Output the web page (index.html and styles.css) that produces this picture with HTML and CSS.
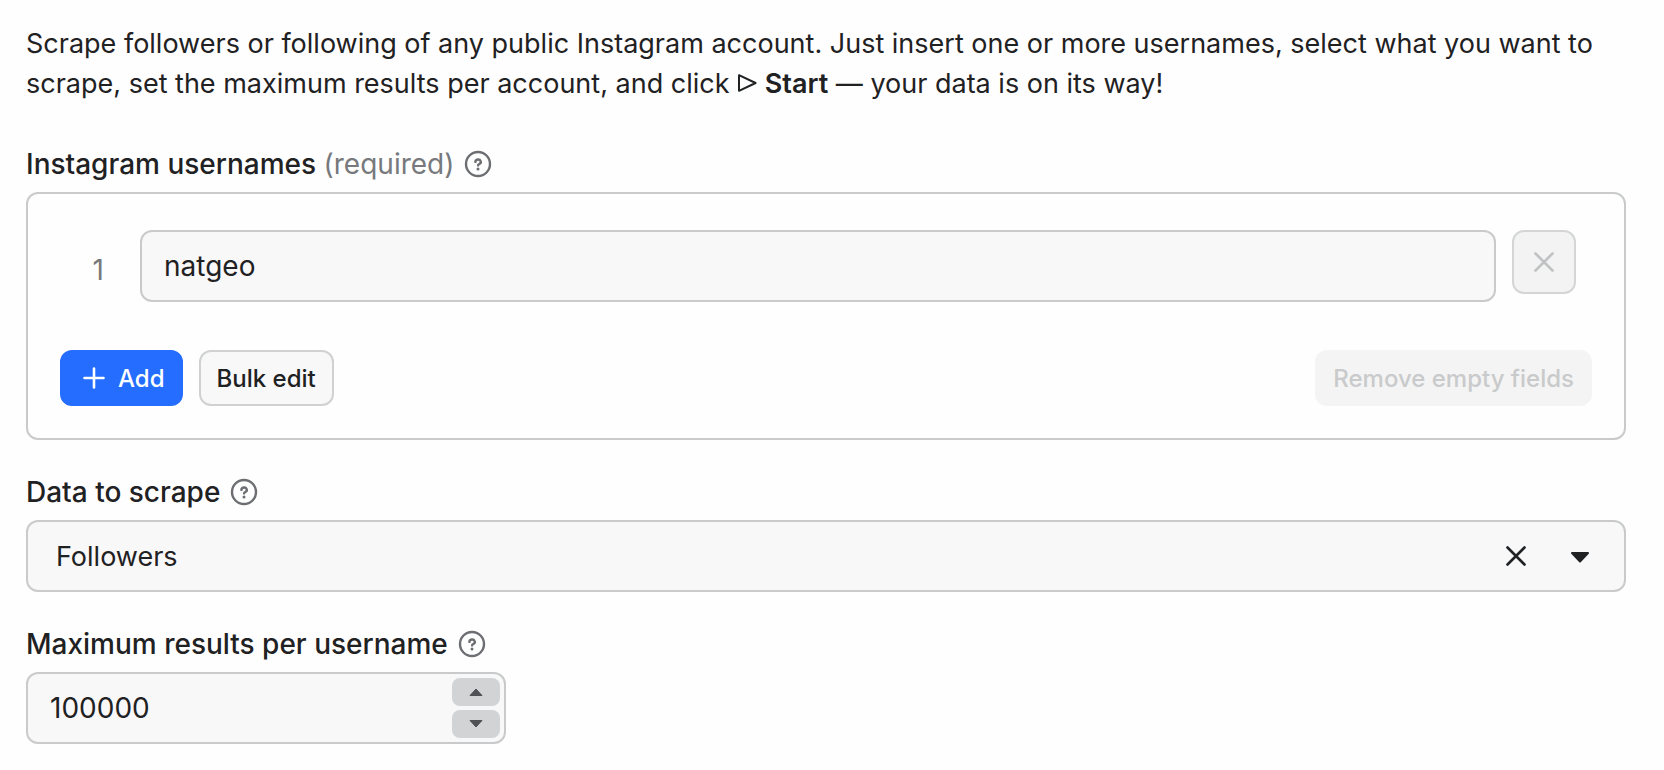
FILE: index.html
```html
<!DOCTYPE html>
<html lang="en">
<head>
  <meta charset="UTF-8">
  <meta name="viewport" content="width=device-width, initial-scale=1">
  <title>Instagram followers scraper</title>
  <link rel="stylesheet" href="styles.css">
</head>
<body>

  <form class="input-form">
    <p class="intro">
      Scrape followers or following of any public Instagram account. Just insert one or more usernames, select what you want to scrape, set the maximum results per account, and click
      <svg class="play" viewBox="0 0 20 20" aria-hidden="true"><path d="M2 2.2v15.6L18.6 10z"/></svg>
      <strong>Start</strong> — your data is on its way!
    </p>

    <section class="field">
      <div class="field-label">
        <label for="username-1">Instagram usernames <span class="required">(required)</span></label>
        <button type="button" class="help" aria-label="Help: Instagram usernames">
          <svg viewBox="0 0 32 32"><circle cx="16" cy="16" r="12"/><path d="M13.4 13.9a2.7 2.4 0 1 1 4 2.1c-.9.5-1.3.7-1.3 1.4"/><circle class="dot" cx="16" cy="21" r="1.5"/></svg>
        </button>
      </div>

      <div class="list">
        <div class="list-row">
          <span class="row-number">1</span>
          <input class="text-input" id="username-1" type="text" value="natgeo">
          <button type="button" class="btn-remove" aria-label="Remove username" disabled>
            <svg viewBox="0 0 32 32"><path d="M7.5 7.5l17 17M24.5 7.5l-17 17"/></svg>
          </button>
        </div>
        <div class="list-actions">
          <button type="button" class="btn btn-primary">
            <svg viewBox="0 0 32 32"><path d="M16 6.5v19M6.5 16h19"/></svg>
            Add
          </button>
          <button type="button" class="btn">Bulk edit</button>
          <button type="button" class="btn btn-last" disabled>Remove empty fields</button>
        </div>
      </div>
    </section>

    <section class="field">
      <div class="field-label">
        <label for="data-type">Data to scrape</label>
        <button type="button" class="help" aria-label="Help: data to scrape">
          <svg viewBox="0 0 32 32"><circle cx="16" cy="16" r="12"/><path d="M13.4 13.9a2.7 2.4 0 1 1 4 2.1c-.9.5-1.3.7-1.3 1.4"/><circle class="dot" cx="16" cy="21" r="1.5"/></svg>
        </button>
      </div>
      <div class="select-wrap">
        <select class="text-input select" id="data-type">
          <option selected>Followers</option>
          <option>Following</option>
        </select>
        <div class="select-icons">
          <button type="button" class="clear" aria-label="Clear selection">
            <svg viewBox="0 0 32 32"><path d="M7.5 7.5l17 17M24.5 7.5l-17 17"/></svg>
          </button>
          <svg class="caret" viewBox="0 0 32 32" aria-hidden="true"><path d="M8 13h16l-8 8.5z"/></svg>
        </div>
      </div>
    </section>

    <section class="field">
      <div class="field-label">
        <label for="max-results">Maximum results per username</label>
        <button type="button" class="help" aria-label="Help: maximum results per username">
          <svg viewBox="0 0 32 32"><circle cx="16" cy="16" r="12"/><path d="M13.4 13.9a2.7 2.4 0 1 1 4 2.1c-.9.5-1.3.7-1.3 1.4"/><circle class="dot" cx="16" cy="21" r="1.5"/></svg>
        </button>
      </div>
      <div class="number-wrap">
        <input class="text-input number" id="max-results" type="number" value="100000">
        <div class="stepper">
          <button type="button" aria-label="Increase" data-step="up">
            <svg viewBox="0 0 16 10"><path d="M2 8.5h12L8 2z"/></svg>
          </button>
          <button type="button" aria-label="Decrease" data-step="down">
            <svg viewBox="0 0 16 10"><path d="M2 1.5h12L8 8z"/></svg>
          </button>
        </div>
      </div>
    </section>
  </form>

  <script>
    const maxResults = document.getElementById('max-results');
    document.querySelectorAll('[data-step]').forEach(btn => {
      btn.addEventListener('click', () => {
        if (btn.dataset.step === 'up') maxResults.stepUp();
        else maxResults.stepDown();
      });
    });
  </script>

</body>
</html>
```
FILE: styles.css
```css
* { box-sizing: border-box; }

body {
  margin: 0;
  background: #fefefe;
  color: #1f2123;
  font-family: Inter, "Liberation Sans", sans-serif;
  font-size: 28px;
  line-height: 40px;
}

button, input, select {
  margin: 0;
  font-family: inherit;
  font-size: inherit;
  color: inherit;
}
button { cursor: pointer; }
button:disabled { cursor: default; }
svg { display: block; }

.input-form {
  display: flex;
  flex-direction: column;
  gap: 32px;
  padding: 24px 38px 24px 26px;
}

.intro { margin: 0 0 8px; font-size: 27px; }
.intro strong { font-weight: 600; }
.play {
  display: inline-block;
  width: 20px; height: 20px;
  fill: none; stroke: currentColor;
  stroke-width: 2; stroke-linejoin: round;
}

/* labels */
.field-label {
  display: flex; align-items: center;
  gap: 8px;
  margin-bottom: 8px;
  font-weight: 500;
}
.required { font-weight: 400; color: #77797d; }
.help {
  width: 32px; height: 32px;
  padding: 0; border: 0;
  background: none; color: #6c6e71;
}
.help svg {
  fill: none; stroke: currentColor;
  stroke-width: 2.4; stroke-linecap: round;
}
.help .dot { fill: currentColor; stroke: none; }

/* inputs */
.text-input {
  width: 100%; height: 72px;
  padding: 0 22px;
  border: 2px solid #c9cacb;
  border-radius: 12px;
  background: #f8f8f8;
}

.list {
  padding: 36px 32px 32px;
  border: 2px solid #c9cacb;
  border-radius: 12px;
}
.list-row {
  display: flex; align-items: flex-start;
  gap: 16px;
  min-height: 80px;
  padding-right: 16px;
}
.list-row .text-input { flex: 1; min-width: 0; }
.row-number {
  width: 64px;
  align-self: center;
  padding-right: 20px;
  text-align: right;
  color: #77797d;
}
.btn-remove {
  display: flex; align-items: center; justify-content: center;
  width: 64px; height: 64px;
  padding: 0;
  border: 2px solid #d4d5d5;
  border-radius: 12px;
  background: #f3f3f3; color: #c1c2c3;
}
.btn-remove svg, .clear svg, .btn svg {
  width: 32px; height: 32px;
  fill: none; stroke: currentColor;
  stroke-width: 2.6; stroke-linecap: round;
}

.list-actions {
  display: flex; gap: 16px;
  margin-top: 40px;
}
.btn {
  display: flex; align-items: center;
  gap: 8px;
  height: 56px;
  padding: 0 16px;
  border: 2px solid #d0d1d2;
  border-radius: 12px;
  background: #f8f8f8;
  font-size: 24px; font-weight: 500;
}
.btn-primary { border-color: #246dff; background: #246dff; color: #fff; }
.btn:disabled { border-color: #f4f4f4; background: #f4f4f4; color: #c9cacb; }
.btn-last { margin-left: auto; }

/* select */
.select-wrap { position: relative; }
.select {
  display: block;
  padding: 0 128px 0 28px;
  appearance: none;
  font-size: 27px;
}
.select-icons {
  position: absolute; top: 0; right: 30px; bottom: 0;
  display: flex; align-items: center; gap: 32px;
  pointer-events: none;
}
.clear {
  padding: 0; border: 0;
  background: none;
  pointer-events: auto;
}
.caret {
  width: 32px; height: 32px;
  fill: currentColor; stroke: currentColor;
  stroke-width: 2; stroke-linejoin: round;
}

/* number */
.number-wrap { position: relative; max-width: 480px; }
.number { display: block; padding-right: 64px; appearance: textfield; }
.number::-webkit-inner-spin-button,
.number::-webkit-outer-spin-button { appearance: none; margin: 0; }
.stepper {
  position: absolute; top: 6px; right: 6px; bottom: 6px;
  display: flex; flex-direction: column; gap: 4px;
  width: 48px;
}
.stepper button {
  display: flex; align-items: center; justify-content: center;
  flex: 1;
  padding: 0; border: 0;
  border-radius: 8px;
  background: #d2d3d5; color: #4f5154;
}
.stepper svg {
  width: 16px; height: 10px;
  fill: currentColor; stroke: currentColor;
  stroke-width: 1; stroke-linejoin: round;
}
```
